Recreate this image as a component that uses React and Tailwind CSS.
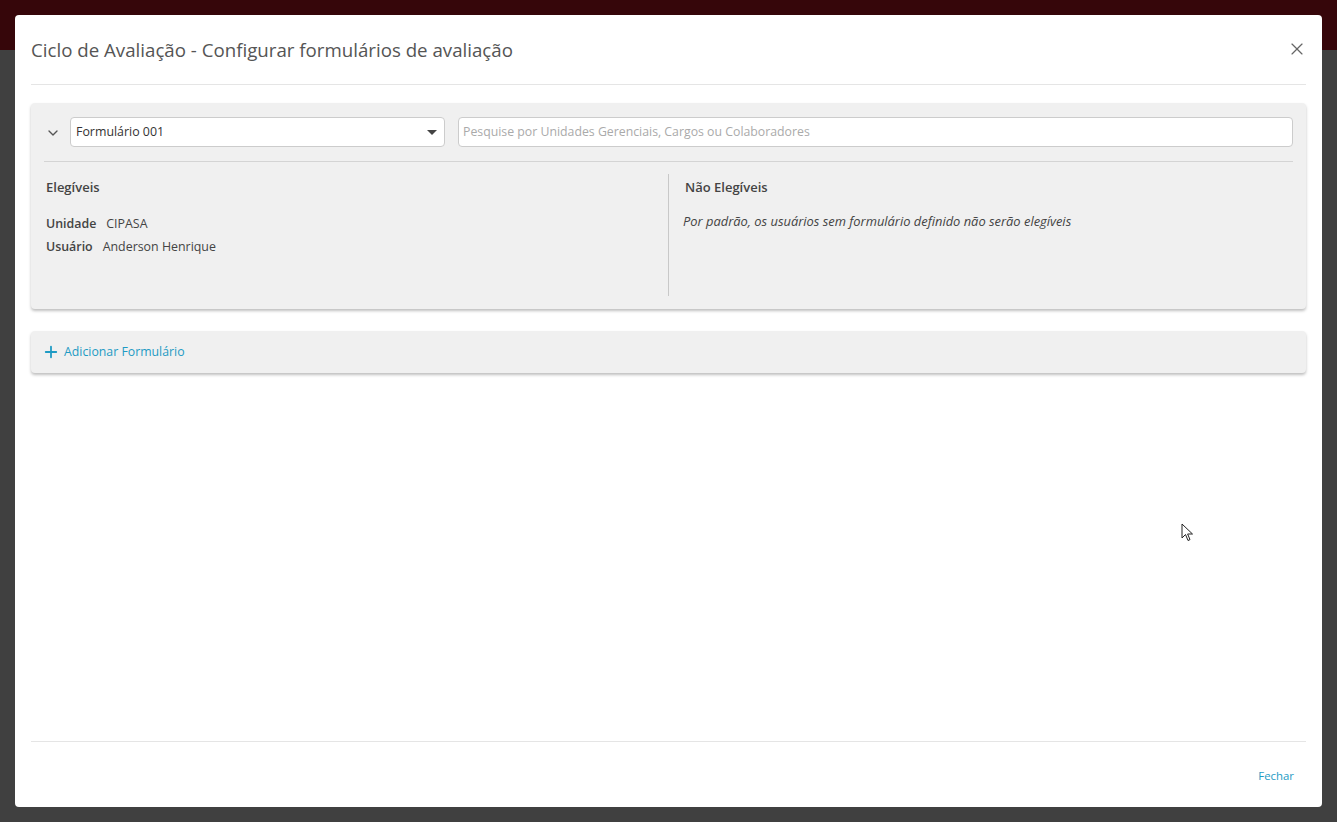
import React from "react";
import { ChevronDown, X, Plus } from "lucide-react";

const font = { fontFamily: '"Open Sans", "Noto Sans", sans-serif' };

const App = () => {
  return (
    <div className="relative w-[1337px] h-[822px] overflow-hidden bg-[#404040]" style={font}>
      {/* app behind the modal */}
      <div className="h-[50px] bg-[#36060a]" />

      <div className="absolute left-[15px] top-[15px] w-[1307px] h-[792px] bg-white rounded flex flex-col px-4">
        {/* header */}
        <div className="h-[70px] pt-[2px] flex items-center justify-between border-b border-[#e5e5e5]">
          <h1 className="text-[18.7px] text-[#555]">
            Ciclo de Avaliação - Configurar formulários de avaliação
          </h1>
          <X className="w-5 h-5 text-[#666] -mr-[1px] -mt-[4px]" strokeWidth={1.4} />
        </div>

        {/* body */}
        <div className="flex-1 pt-[18px] flex flex-col gap-[22px]">
          <div className="bg-[#f0f0f0] rounded shadow-[0_2px_3px_rgba(0,0,0,0.25)] px-[13px] pt-[14px] pb-[13px]">
            <div className="flex items-center pb-[14px] border-b border-[#d4d4d4]">
              <ChevronDown className="w-4 h-4 text-[#555] ml-[1px] mr-[9px] mt-[2px]" strokeWidth={2} />
              <div className="w-[375px] h-[30px] bg-white border border-[#ccc] rounded-sm flex items-center justify-between pl-[5px] pr-[7px]">
                <span className="text-[12.4px] text-[#333]">Formulário 001</span>
                <span className="w-0 h-0 border-l-[5px] border-r-[5px] border-t-[5px] border-l-transparent border-r-transparent border-t-[#444]" />
              </div>
              <div className="flex-1 ml-[13px] h-[30px] bg-white border border-[#ccc] rounded-sm flex items-center px-[4px]">
                <span className="text-[12.3px] text-[#aaa]">Pesquise por Unidades Gerenciais, Cargos ou Colaboradores</span>
              </div>
            </div>
            <div className="flex pt-[12px] h-[134px]">
              <div className="flex-1 pl-[2px] border-r border-[#c8c8c8]">
                <div className="text-[13px] font-semibold text-[#444] leading-[26px]">Elegíveis</div>
                <div className="mt-[12px] text-[12.4px] text-[#444] leading-[23px]">
                  <div><span className="font-semibold">Unidade</span><span className="ml-[10px]">CIPASA</span></div>
                  <div><span className="font-semibold">Usuário</span><span className="ml-[10px]">Anderson Henrique</span></div>
                </div>
              </div>
              <div className="w-[624px] pl-[16px]">
                <div className="text-[13px] font-semibold text-[#444] leading-[26px]">Não Elegíveis</div>
                <div className="mt-[12px] -ml-[2px] text-[12.9px] italic text-[#444]">
                  Por padrão, os usuários sem formulário definido não serão elegíveis
                </div>
              </div>
            </div>
          </div>

          <div className="bg-[#f0f0f0] rounded shadow-[0_2px_3px_rgba(0,0,0,0.25)] h-[42px] flex items-center px-[11px] gap-[4px]">
            <Plus className="w-[18px] h-[18px] text-[#1e9bc4]" strokeWidth={2.4} />
            <span className="text-[12.3px] text-[#1e9bc4] mt-[1px]">Adicionar Formulário</span>
          </div>
        </div>

        {/* footer */}
        <div className="h-[66px] border-t border-[#e5e5e5] flex items-center justify-end pr-3">
          <span className="text-[11.4px] text-[#1e9bc4] mt-[2px]">Fechar</span>
        </div>
      </div>

      {/* mouse cursor */}
      <svg className="absolute left-[1181px] top-[523px]" width="14" height="20" viewBox="0 0 14 20">
        <path d="M1 1 L1 15 L4.5 11.5 L7 17.5 L9 16.6 L6.6 11 L11.5 11 Z" fill="white" stroke="#222" strokeWidth="1" strokeLinejoin="round" />
      </svg>
    </div>
  );
};

export default App;
